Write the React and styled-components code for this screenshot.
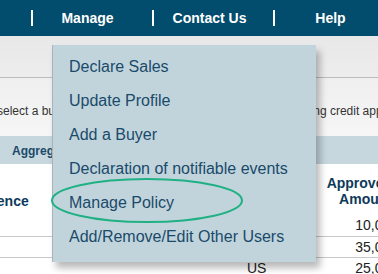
import React from "react";
import styled, { createGlobalStyle } from "styled-components";

const GlobalStyle = createGlobalStyle`
  html, body { margin: 0; padding: 0; }
  body {
    width: 378px;
    height: 274px;
    overflow: hidden;
    background: #ffffff;
    font-family: "Liberation Sans", Arial, sans-serif;
  }
`;

const Page = styled.div`
  position: relative;
  width: 378px;
  height: 274px;
  overflow: hidden;
`;

const NavBar = styled.nav`
  height: 36px;
  background: #024d6d;
  display: flex;
  align-items: center;
  padding-left: 31px;
`;

const NavItem = styled.div`
  position: relative;
  width: 121px;
  flex: none;
  box-sizing: border-box;
  padding-right: ${(p) => p.$shift || 0}px;
  text-align: center;
  color: #ffffff;
  font-weight: bold;
  font-size: 14px;
  line-height: 38px;
  &::before {
    content: "";
    position: absolute;
    left: 0;
    top: 11px;
    width: 2px;
    height: 16px;
    background: #ffffff;
  }
`;

const Toolbar = styled.div`
  height: 41px;
  background: linear-gradient(#e8e8e8, #ededed);
  border-bottom: 1px solid #bcbcbc;
`;

const Intro = styled.div`
  height: 58px;
  background: linear-gradient(#efefef, #f6f6f6);
  display: flex;
  justify-content: space-between;
  align-items: flex-start;
  padding-top: 25px;
  box-sizing: border-box;
  font-size: 12px;
  line-height: 16px;
  color: #333333;
  white-space: nowrap;
`;

const IntroLeft = styled.span`
  margin-left: -3px;
`;

const IntroRight = styled.span`
  margin-right: -48px;
`;

const Band = styled.div`
  height: 28px;
  background: #c6d7de;
  display: flex;
  align-items: center;
  padding-left: 12px;
  padding-top: 2px;
  box-sizing: border-box;
  font-size: 12px;
  font-weight: bold;
  color: #1b4a69;
`;

const Table = styled.div`
  display: grid;
  grid-template-columns: 160px 1fr 60px 120px;
  width: 420px;
  font-size: 14px;
  color: #222222;
`;

const HeadCell = styled.div`
  height: 49px;
  display: flex;
  align-items: flex-end;
  justify-content: ${(p) => (p.$right ? "flex-end" : "flex-start")};
  text-align: ${(p) => (p.$right ? "right" : "left")};
  padding-bottom: ${(p) => (p.$right ? 6 : 4)}px;
  padding-right: ${(p) => (p.$right ? 28 : 0)}px;
  box-sizing: border-box;
  font-weight: bold;
  line-height: 16px;
  color: #0e3a5a;
`;

const RefHead = styled(HeadCell)`
  margin-left: -39px;
`;

const Cell = styled.div`
  height: ${(p) => (p.$first ? 23 : 21)}px;
  border-top: ${(p) => (p.$first ? "none" : "1px solid #c8c8c8")};
  display: flex;
  align-items: center;
  justify-content: ${(p) => (p.$right ? "flex-end" : "flex-start")};
  padding-right: ${(p) => (p.$right ? 22 : 0)}px;
  padding-left: ${(p) => (p.$pad || 0)}px;
  box-sizing: border-box;
  line-height: 16px;
`;

const Dropdown = styled.ul`
  position: absolute;
  left: 52px;
  top: 45px;
  width: 264px;
  height: 217px;
  margin: 0;
  padding: 5px 0 0 0;
  box-sizing: border-box;
  list-style: none;
  background: #c1d4db;
  border-left: 1px solid #a9b4b8;
  box-shadow: 4px 6px 7px rgba(0, 0, 0, 0.28);
`;

const MenuItem = styled.li`
  position: relative;
  height: 34px;
  display: flex;
  align-items: center;
  padding-left: 16px;
  font-size: 16px;
  color: #1a4a6b;
  white-space: nowrap;
`;

const Circle = styled.svg`
  position: absolute;
  left: -2px;
  top: -8px;
  width: 192px;
  height: 45px;
  overflow: visible;
`;

const items = [
  "Declare Sales",
  "Update Profile",
  "Add a Buyer",
  "Declaration of notifiable events",
  "Manage Policy",
  "Add/Remove/Edit Other Users",
];

const rows = [
  { country: "", amount: "10,000" },
  { country: "", amount: "35,000" },
  { country: "US", amount: "25,000" },
];

export default function App() {
  return (
    <Page>
      <GlobalStyle />
      <NavBar>
        <NavItem $shift={8}>Manage</NavItem>
        <NavItem $shift={6}>Contact Us</NavItem>
        <NavItem $shift={6}>Help</NavItem>
      </NavBar>
      <Toolbar />
      <Intro>
        <IntroLeft>select a buyer from the list below</IntroLeft>
        <IntroRight>pending credit applications</IntroRight>
      </Intro>
      <Band>Aggregate Exposure</Band>
      <Table>
        <RefHead>Reference</RefHead>
        <HeadCell />
        <HeadCell />
        <HeadCell $right>
          Approved
          <br />
          Amount
        </HeadCell>
        {rows.map((r, i) => (
          <React.Fragment key={i}>
            <Cell $first={i === 0} />
            <Cell $first={i === 0} />
            <Cell $first={i === 0} $pad={7}>
              {r.country}
            </Cell>
            <Cell $first={i === 0} $right>
              {r.amount}
            </Cell>
          </React.Fragment>
        ))}
      </Table>
      <Dropdown>
        {items.map((t) => (
          <MenuItem key={t}>
            {t}
            {t === "Manage Policy" && (
              <Circle viewBox="0 0 192 45">
                <ellipse
                  cx="96"
                  cy="22.5"
                  rx="95"
                  ry="21.5"
                  fill="none"
                  stroke="#1fb183"
                  strokeWidth="2"
                />
              </Circle>
            )}
          </MenuItem>
        ))}
      </Dropdown>
    </Page>
  );
}
